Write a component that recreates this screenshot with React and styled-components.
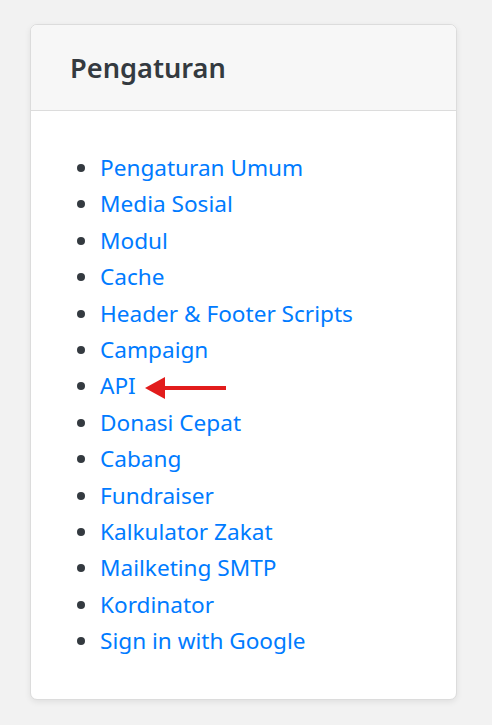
import styled, { createGlobalStyle } from 'styled-components'

const GlobalStyle = createGlobalStyle`
  body {
    margin: 0;
    background: #f2f2f2;
    font-family: "Noto Sans", "Open Sans", sans-serif;
  }
`

const Page = styled.div`
  padding: 24px 35px 28px 30px;
`

const Card = styled.section`
  background: #fff;
  border: 1px solid #dcdcdc;
  border-radius: 7px;
  box-shadow: 0 2px 6px rgba(0, 0, 0, 0.08);
  overflow: hidden;
`

const CardHeader = styled.header`
  background: #f7f7f7;
  border-bottom: 1px solid #dcdcdc;
  height: 85px;
  display: flex;
  align-items: center;
  padding: 0 39px;
`

const Title = styled.h2`
  margin: 0;
  font-size: 27.2px;
  font-weight: 600;
  color: #343a40;
`

const CardBody = styled.div`
  padding: 39px;
`

const List = styled.ul`
  margin: 0;
  padding-left: 30px;
  color: #343a40;
  font-size: 22.6px;
  line-height: 36.4px;
`

const Item = styled.li``

const ItemLink = styled.a`
  color: #007bff;
  text-decoration: none;
`

const Arrow = () => (
  <svg width="82" height="26" viewBox="0 0 82 26" style={{ verticalAlign: 'middle', marginLeft: 9 }}>
    <path d="M18 11 H81 V15 H18 Z" fill="#e21c1c" />
    <path d="M0 13 L20 2 L20 24 Z" fill="#e21c1c" />
  </svg>
)

const items = [
  'Pengaturan Umum',
  'Media Sosial',
  'Modul',
  'Cache',
  'Header & Footer Scripts',
  'Campaign',
  'API',
  'Donasi Cepat',
  'Cabang',
  'Fundraiser',
  'Kalkulator Zakat',
  'Mailketing SMTP',
  'Kordinator',
  'Sign in with Google',
]

export default function App() {
  return (
    <>
      <GlobalStyle />
      <Page>
        <Card>
          <CardHeader>
            <Title>Pengaturan</Title>
          </CardHeader>
          <CardBody>
            <List>
              {items.map((label) => (
                <Item key={label}>
                  <ItemLink href="#">{label}</ItemLink>
                  {label === 'API' && <Arrow />}
                </Item>
              ))}
            </List>
          </CardBody>
        </Card>
      </Page>
    </>
  )
}
